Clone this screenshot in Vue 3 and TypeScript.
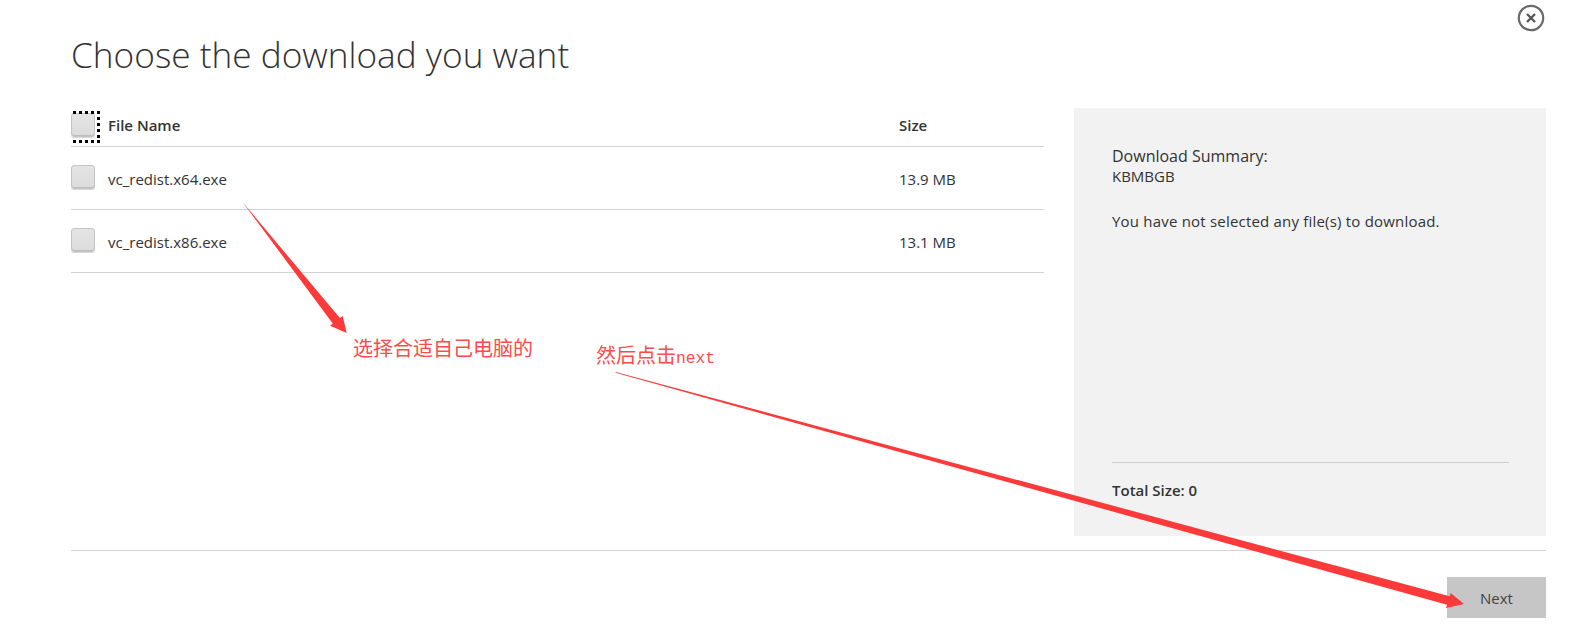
<script setup lang="ts">
interface DownloadFile {
  name: string
  size: string
}
const files: DownloadFile[] = [
  { name: 'vc_redist.x64.exe', size: '13.9 MB' },
  { name: 'vc_redist.x86.exe', size: '13.1 MB' },
]
</script>

<template>
  <div class="page">
    <h1 class="title">Choose the download you want</h1>

    <div class="main">
      <div class="table">
        <div class="row head">
          <span class="check focused"></span>
          <span class="name">File Name</span>
          <span class="size">Size</span>
        </div>
        <div v-for="f in files" :key="f.name" class="row item">
          <span class="check"></span>
          <span class="name">{{ f.name }}</span>
          <span class="size">{{ f.size }}</span>
        </div>
      </div>

      <aside class="panel">
        <div class="summary-title">Download Summary:</div>
        <div class="units">KBMBGB</div>
        <p class="none">You have not selected any file(s) to download.</p>
        <div class="total">Total Size: 0</div>
      </aside>
    </div>

    <div class="footer">
      <button class="next" type="button">Next</button>
    </div>

    <svg class="close" width="28" height="28" viewBox="0 0 28 28" fill="none" aria-label="Close">
      <circle cx="14" cy="14" r="12.2" stroke="#6a6a6a" stroke-width="2.2" />
      <path d="M10 10 18 18M18 10 10 18" stroke="#555" stroke-width="2.3" />
    </svg>

    <svg class="marks" width="1594" height="636" viewBox="0 0 1594 636">
      <polygon fill="#fc3a3a" points="242.5,202 339.9,318.1 342.7,316 346.7,333 330,325.7 332.7,323.5" />
      <polygon fill="#fc3a3a" points="615.5,372.8 615.7,372 1449.7,596.2 1450.7,593 1464,604 1446,608 1447,604.8" />
    </svg>

    <div class="note note-a">选择合适自己电脑的</div>
    <div class="note note-b">然后点击<span class="latin">next</span></div>
  </div>
</template>

<style>
html,
body {
  margin: 0;
  background: #fff;
}
</style>

<style scoped>
.page {
  position: relative;
  width: 1594px;
  height: 636px;
  overflow: hidden;
  background: #fff;
  box-sizing: border-box;
  padding: 0 48px 0 71px;
  font-family: "Open Sans", "Noto Sans", sans-serif;
  color: #333;
}
.title {
  margin: 0;
  height: 108px;
  box-sizing: border-box;
  padding-top: 29px;
  font-size: 35.2px;
  line-height: 50px;
  font-weight: 300;
  color: #333;
}
.main {
  display: flex;
  gap: 30px;
  height: 428px;
}
.table {
  width: 973px;
}
.row {
  display: grid;
  grid-template-columns: 37px 791px 1fr;
  border-bottom: 1px solid #d2d2d2;
  box-sizing: border-box;
  font-size: 15px;
}
.head {
  height: 39px;
  padding-bottom: 4px;
  align-items: center;
  font-weight: 600;
}
.head .check {
  align-self: start;
  margin-top: 5px;
}
.item {
  height: 63px;
  padding-top: 18px;
  line-height: 28px;
}
.check {
  position: relative;
  display: block;
  width: 24px;
  height: 24px;
  box-sizing: border-box;
  border: 1px solid #c4c4c4;
  border-radius: 3px;
  background: linear-gradient(#e4e4e4, #dcdcdc);
  box-shadow: inset 0 -1px 0 #bdbdbd, 0 1px 0 #d8d8d8;
}
.focused::after {
  content: "";
  position: absolute;
  left: 1px;
  top: -3px;
  width: 27px;
  height: 32px;
  background:
    repeating-linear-gradient(90deg, #000 0 3px, transparent 3px 6px) top left / 100% 3px no-repeat,
    repeating-linear-gradient(90deg, #000 0 3px, transparent 3px 6px) bottom left / 100% 3px no-repeat,
    repeating-linear-gradient(180deg, #000 0 3px, transparent 3px 6px) top right / 3px 100% no-repeat;
}
.panel {
  width: 472px;
  box-sizing: border-box;
  padding: 37px 37px 36px 38px;
  background: #f2f2f2;
  display: flex;
  flex-direction: column;
}
.summary-title {
  font-size: 16px;
  line-height: 22px;
}
.units {
  font-size: 15px;
  line-height: 18px;
}
.none {
  margin: 26px 0 0;
  font-size: 15px;
  line-height: 20px;
  letter-spacing: 0.2px;
}
.total {
  margin-top: auto;
  border-top: 1px solid #cfcfcf;
  padding-top: 17px;
  font-size: 15px;
  line-height: 20px;
  font-weight: 600;
}
.footer {
  margin-top: 14px;
  border-top: 1px solid #d2d2d2;
  padding-top: 26px;
  display: flex;
  justify-content: flex-end;
}
.next {
  width: 99px;
  height: 41px;
  border: 0;
  padding: 0;
  background: #c6c6c6;
  color: #444;
  font-family: inherit;
  font-size: 15px;
}
.close {
  position: absolute;
  left: 1517px;
  top: 4px;
}
.marks {
  position: absolute;
  left: 0;
  top: 0;
}
.note {
  position: absolute;
  color: #fb4b4b;
  font-family: "Noto Sans CJK SC", sans-serif;
  font-size: 20px;
  font-weight: 400;
  line-height: 26px;
  white-space: nowrap;
}
.note-a {
  left: 353px;
  top: 335px;
}
.note-b {
  left: 596px;
  top: 342px;
}
.latin {
  font-family: "Liberation Mono", monospace;
  font-size: 16.3px;
}
</style>
